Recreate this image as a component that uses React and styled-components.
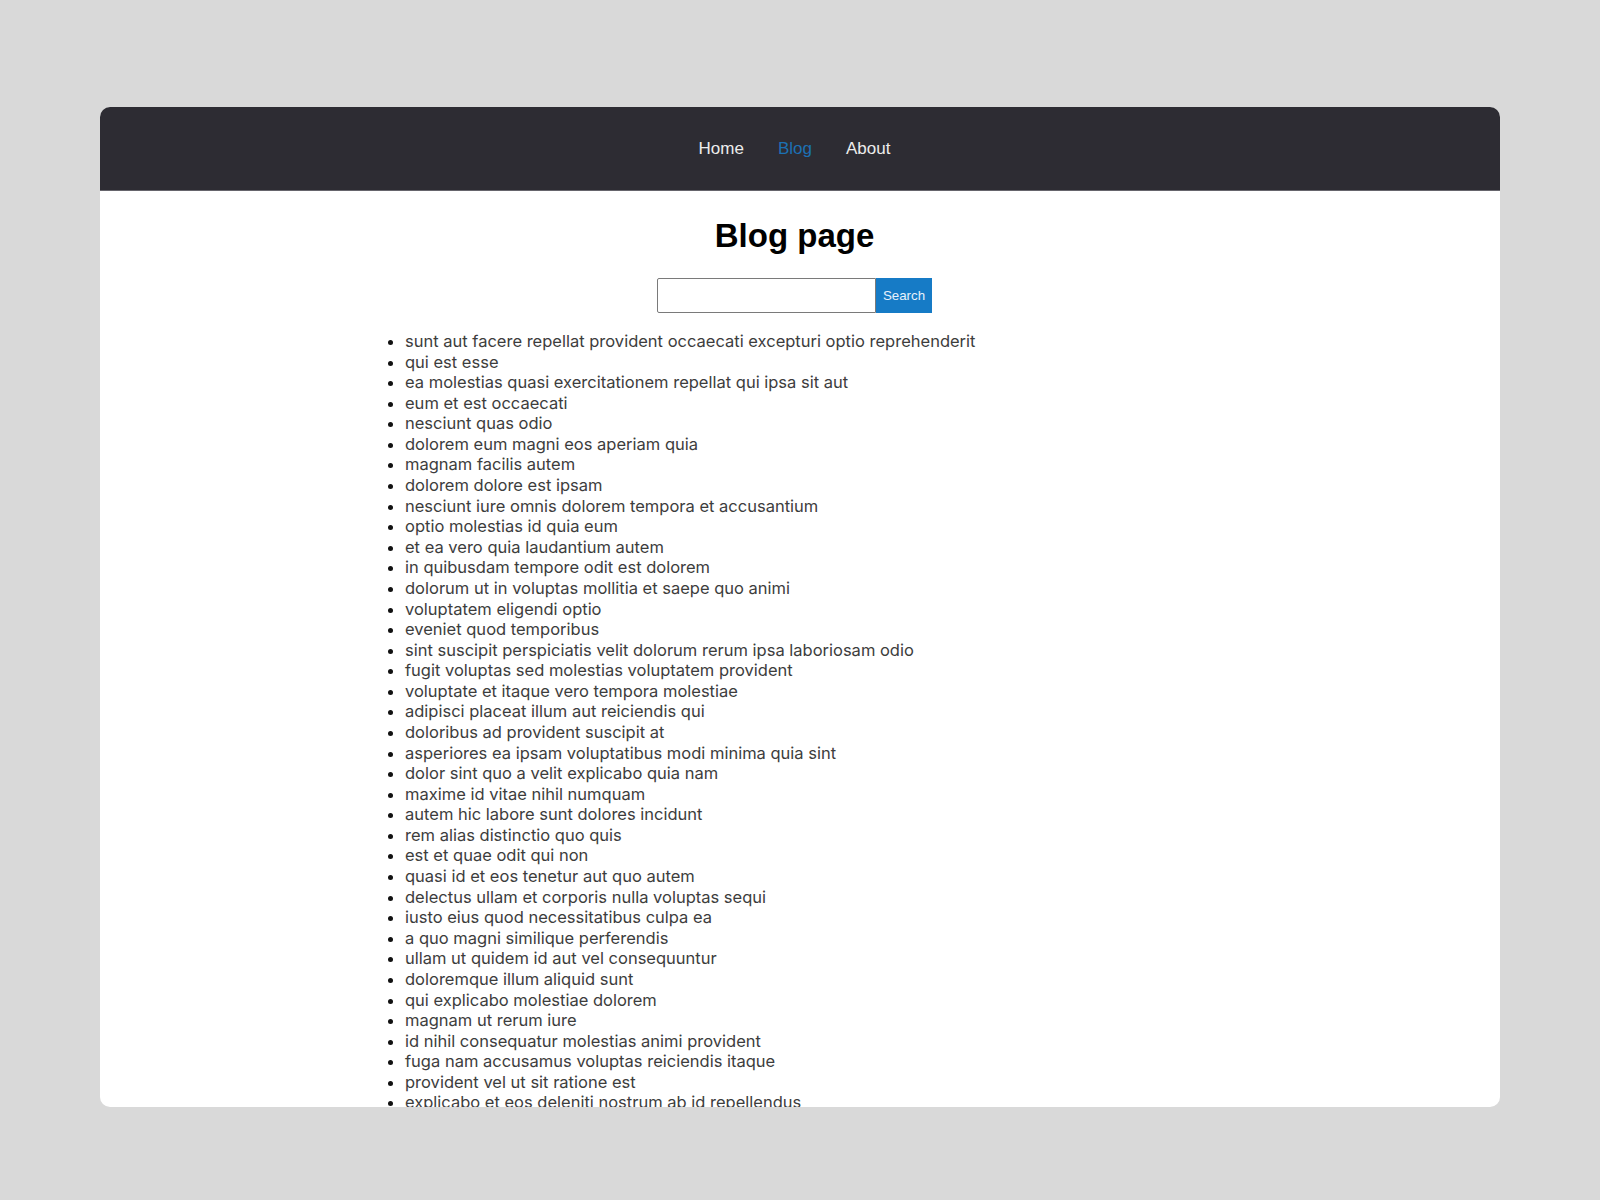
import React from "react";
import styled, { createGlobalStyle } from "styled-components";

const GlobalStyle = createGlobalStyle`
  html, body { margin: 0; padding: 0; }
  body {
    background: #d9d9d9;
    font-family: "Liberation Sans", Arial, sans-serif;
  }
`;

const Page = styled.div`
  padding: 107px 100px 0;
  display: flex;
  justify-content: center;
`;

const Card = styled.div`
  width: 1400px;
  height: 1000px;
  background: #ffffff;
  border-radius: 10px;
  overflow: hidden;
  display: flex;
  flex-direction: column;
`;

const Header = styled.header`
  height: 83px;
  flex: 0 0 auto;
  background: #2d2c33;
  border-bottom: 1px solid #66656c;
  display: flex;
  align-items: center;
  justify-content: center;
  padding-right: 11px;
`;

const Nav = styled.nav`
  display: flex;
  gap: 34px;
  align-items: center;
`;

const NavLink = styled.a`
  font-family: "Liberation Sans", Arial, sans-serif;
  font-size: 17px;
  text-decoration: none;
  color: ${(p) => (p.$active ? "#1c71b4" : "#ececec")};
  cursor: pointer;
`;

const Main = styled.main`
  flex: 1 1 auto;
  padding-right: 11px;
  display: flex;
  flex-direction: column;
  align-items: center;
`;

const Title = styled.h1`
  margin: 26px 0 0;
  font-family: "Liberation Sans", Arial, sans-serif;
  font-size: 33px;
  font-weight: 700;
  color: #000;
`;

const SearchForm = styled.form`
  margin-top: 23px;
  display: flex;
  align-items: stretch;
  height: 35px;
`;

const SearchInput = styled.input`
  box-sizing: border-box;
  width: 219px;
  height: 35px;
  border: 1px solid #7a7a7a;
  border-radius: 2px 0 0 2px;
  padding: 0 8px;
  font-family: "Liberation Sans", Arial, sans-serif;
  font-size: 13.33px;
  outline: none;
`;

const SearchButton = styled.button`
  box-sizing: border-box;
  height: 35px;
  padding: 0 6px;
  border: 1px solid #167bc6;
  background: #167bc6;
  color: #e6f1fb;
  font-family: "Liberation Sans", Arial, sans-serif;
  font-size: 13.33px;
  cursor: pointer;
`;

const PostList = styled.ul`
  align-self: stretch;
  margin: 18px 0 0 265px;
  padding-left: 40px;
  font-family: Inter, "Noto Sans", sans-serif;
  font-size: 16.5px;
  line-height: 20.58px;
  color: #111;
`;

const PostItem = styled.li`
  color: #111;
`;

const PostTitle = styled.span`
  color: #3d3d3d;
`;

const posts = [
  "sunt aut facere repellat provident occaecati excepturi optio reprehenderit",
  "qui est esse",
  "ea molestias quasi exercitationem repellat qui ipsa sit aut",
  "eum et est occaecati",
  "nesciunt quas odio",
  "dolorem eum magni eos aperiam quia",
  "magnam facilis autem",
  "dolorem dolore est ipsam",
  "nesciunt iure omnis dolorem tempora et accusantium",
  "optio molestias id quia eum",
  "et ea vero quia laudantium autem",
  "in quibusdam tempore odit est dolorem",
  "dolorum ut in voluptas mollitia et saepe quo animi",
  "voluptatem eligendi optio",
  "eveniet quod temporibus",
  "sint suscipit perspiciatis velit dolorum rerum ipsa laboriosam odio",
  "fugit voluptas sed molestias voluptatem provident",
  "voluptate et itaque vero tempora molestiae",
  "adipisci placeat illum aut reiciendis qui",
  "doloribus ad provident suscipit at",
  "asperiores ea ipsam voluptatibus modi minima quia sint",
  "dolor sint quo a velit explicabo quia nam",
  "maxime id vitae nihil numquam",
  "autem hic labore sunt dolores incidunt",
  "rem alias distinctio quo quis",
  "est et quae odit qui non",
  "quasi id et eos tenetur aut quo autem",
  "delectus ullam et corporis nulla voluptas sequi",
  "iusto eius quod necessitatibus culpa ea",
  "a quo magni similique perferendis",
  "ullam ut quidem id aut vel consequuntur",
  "doloremque illum aliquid sunt",
  "qui explicabo molestiae dolorem",
  "magnam ut rerum iure",
  "id nihil consequatur molestias animi provident",
  "fuga nam accusamus voluptas reiciendis itaque",
  "provident vel ut sit ratione est",
  "explicabo et eos deleniti nostrum ab id repellendus",
];

export default function App() {
  return (
    <>
      <GlobalStyle />
      <Page>
        <Card>
          <Header>
            <Nav>
              <NavLink>Home</NavLink>
              <NavLink $active>Blog</NavLink>
              <NavLink>About</NavLink>
            </Nav>
          </Header>
          <Main>
            <Title>Blog page</Title>
            <SearchForm onSubmit={(e) => e.preventDefault()}>
              <SearchInput type="search" />
              <SearchButton type="submit">Search</SearchButton>
            </SearchForm>
            <PostList>
              {posts.map((t) => (
                <PostItem key={t}>
                  <PostTitle>{t}</PostTitle>
                </PostItem>
              ))}
            </PostList>
          </Main>
        </Card>
      </Page>
    </>
  );
}
